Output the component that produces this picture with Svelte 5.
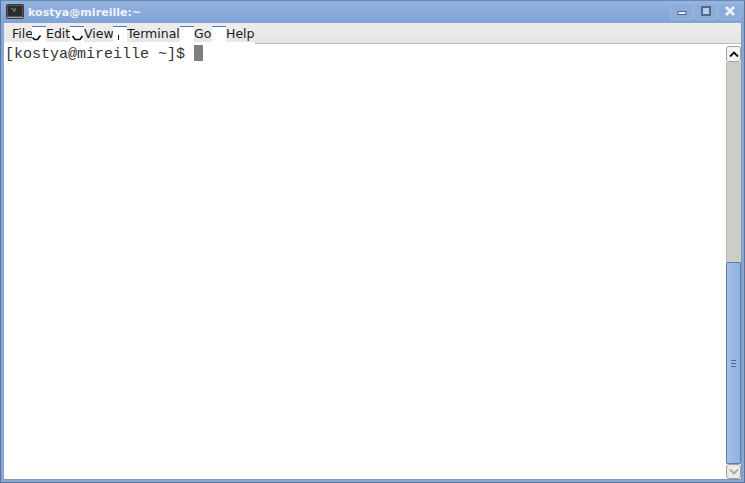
<script>
  const items = [
    { label: 'File', w: 28, pad: 8, mark: 'a' },
    { label: 'Edit', w: 24, pad: 0, mark: 'b' },
    { label: 'View', w: 29, pad: 0, mark: 'c' },
    { label: 'Terminal', w: 53, pad: 0 },
    { label: 'Go', w: 18, pad: 0 },
    { label: 'Help', w: 29, pad: 0, last: true }
  ];
</script>

<div class="window">
  <header class="titlebar">
    <svg class="appicon" width="18" height="15" viewBox="0 0 18 15">
      <rect x="0.5" y="0.5" width="17" height="14" rx="1" fill="#55585a" stroke="#3a3c3d" />
      <rect x="2" y="2" width="14" height="10" fill="#2b2d2e" />
      <path d="M5 4l3 2v2M9 4v3" stroke="#8d938f" fill="none" />
      <path d="M1 13.5h16" stroke="#a5a7a6" />
    </svg>
    <span class="title">kostya@mireille:~</span>
    <div class="wbtns">
      <div class="wbtn">
        <svg width="10" height="10" viewBox="0 0 10 10"><rect x="1" y="5.5" width="8" height="3" fill="#e6edf7" stroke="#51688c" /></svg>
      </div>
      <div class="wbtn">
        <svg width="10" height="10" viewBox="0 0 10 10"><rect x="1" y="1" width="8" height="8" fill="#b7cdea" stroke="#51688c" stroke-width="2" /></svg>
      </div>
      <div class="wbtn">
        <svg width="12" height="12" viewBox="0 0 12 12"><path d="M2 2l8 8M10 2l-8 8" stroke="#eef3fa" stroke-width="2.6" /></svg>
      </div>
    </div>
  </header>
  <div class="body">
    <nav class="menubar">
      {#each items as it}
        <div class="item" class:first={it.pad} style="width:{it.w}px">{it.label}</div>
        {#if !it.last}
          <div class="gap">
            {#if it.mark === 'a'}
              <svg class="m" width="10" height="6" viewBox="0 0 10 6"><path d="M0.5 2.5l2 2h3l3-4" fill="none" stroke="#111" stroke-width="1.7" /></svg>
            {:else if it.mark === 'b'}
              <svg class="m wide" width="11" height="6" viewBox="0 0 11 6"><path d="M0.5 1l2.5 3.5h5l2.5-3.5" fill="none" stroke="#111" stroke-width="1.7" /></svg>
            {:else if it.mark === 'c'}
              <span class="tick"></span>
            {/if}
          </div>
        {/if}
      {/each}
      <div class="rest"></div>
    </nav>
    <div class="content">
      <div class="term">[kostya@mireille ~]$ <span class="cursor"></span></div>
      <aside class="scroll">
        <div class="arrow">
          <svg width="10" height="7" viewBox="0 0 10 7"><path d="M1 5.5l4-4 4 4" fill="none" stroke="#111" stroke-width="1.8" /></svg>
        </div>
        <div class="trough"></div>
        <div class="thumb"><span></span><span></span><span></span></div>
        <div class="arrow down">
          <svg width="10" height="7" viewBox="0 0 10 7"><path d="M1 1.5l4 4 4-4" fill="none" stroke="#a9a9a6" stroke-width="1.8" /></svg>
        </div>
      </aside>
    </div>
  </div>
</div>

<style>
  :global(body) { margin: 0; background: #82a6d7; }
  .window {
    width: 745px; height: 483px; box-sizing: border-box; display: flex; flex-direction: column;
    background: #85a8d8; border: 1px solid #5d7598; border-top-color: #6d8ab4; overflow: hidden;
    font-family: "DejaVu Sans", sans-serif;
  }
  .titlebar {
    height: 22px; flex: none; display: flex; align-items: center; padding: 0 3px 0 5px;
    background: linear-gradient(#93b3df, #80a4d6);
  }
  .appicon { flex: none; margin-top: -1px; }
  .title { margin-left: 4px; margin-top: 1px; font-size: 11px; font-weight: 700; color: #eef3fa; letter-spacing: 0.05px; }
  .wbtns { margin-left: auto; display: flex; gap: 1px; margin-top: -2px; }
  .wbtn {
    width: 21px; height: 15px; display: flex; align-items: center; justify-content: center;
    border: 1px solid #9ab8e0; border-radius: 3px; background: #8cadda;
  }
  .body { flex: 1; min-height: 0; margin: 0 2px 2px 3px; display: flex; flex-direction: column; background: #fff; border-right: 1px solid #7d97bd; border-bottom: 1px solid #7d97bd; }
  .menubar { height: 21px; flex: none; display: flex; background: #fff; font-size: 12.5px; color: #1b1b1b; }
  .item {
    height: 19px; box-sizing: border-box; background: linear-gradient(#eeedeb, #e8e7e5); padding-top: 4px;
    flex: none; white-space: nowrap; line-height: 14px;
  }
  .item.first { padding-left: 8px; }
  .gap { width: 14px; flex: none; position: relative; height: 21px; background: linear-gradient(#edecea 3px, #4d78c8 3px, #4d78c8 4px, #fff 4px); }
  .m { position: absolute; left: 0; top: 12px; }
  .m.wide { left: 2px; }
  .tick { position: absolute; left: 5px; top: 12px; width: 1px; height: 5px; background: #111; }
  .rest { flex: 1; background: linear-gradient(#eeedeb, #e6e5e3); border-bottom: 1px solid #bdbcb8; }
  .content { flex: 1; min-height: 0; display: flex; background: #fff; }
  .term {
    flex: 1; padding: 1px 0 0 1px; font-family: "Liberation Mono", monospace; font-size: 15px; line-height: 18px;
    color: #333; white-space: pre;
  }
  .cursor { display: inline-block; width: 9px; height: 16px; background: #7f7f7f; vertical-align: -3px; }
  .scroll { width: 15px; flex: none; margin-top: 2px; display: flex; flex-direction: column; }
  .arrow {
    height: 16px; flex: none; box-sizing: border-box; display: flex; align-items: center; justify-content: center;
    background: #f6f5f3; border: 1px solid #a3a29e; border-radius: 3px;
  }
  .arrow.down { background: #ecebe8; height: 15px; }
  .trough { height: 200px; flex: none; background: #cdccc9; box-shadow: inset 1px 0 #b9b8b5; }
  .thumb {
    flex: 1; box-sizing: border-box; display: flex; flex-direction: column; gap: 2px; align-items: center; justify-content: center;
    background: linear-gradient(90deg, #a4c0e8, #8fb0de); border: 1px solid #627ea8; border-radius: 1px;
  }
  .thumb span { width: 5px; height: 1px; background: #4d6a96; }
</style>
